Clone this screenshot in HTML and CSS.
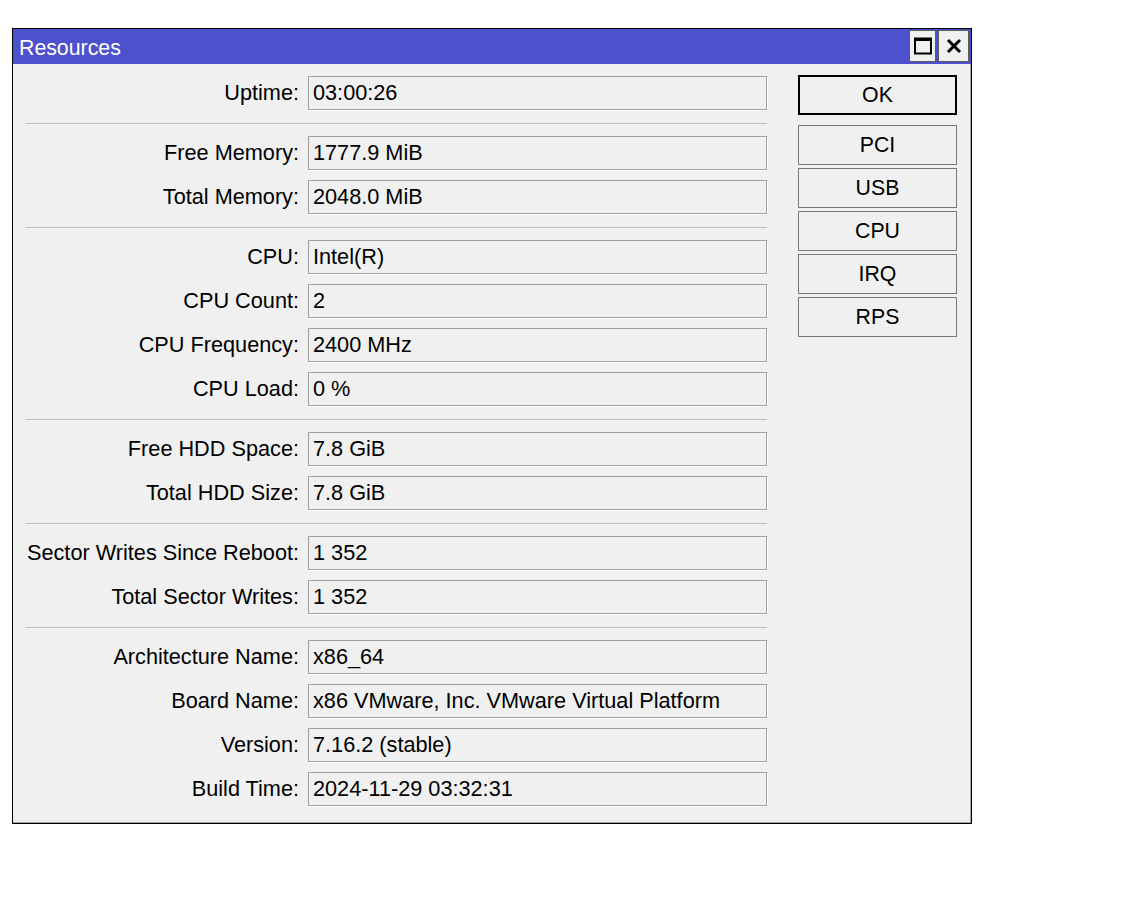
FILE: index.html
```html
<!DOCTYPE html>
<html>
<head>
<meta charset="utf-8">
<title>Resources</title>
<link rel="stylesheet" href="styles.css">
</head>
<body>
<div class="window">
  <div class="titlebar">
    <span class="title">Resources</span>
    <div class="tb-buttons">
      <button class="tb-btn" aria-label="Maximize">
        <svg width="18" height="18" viewBox="0 0 18 18"><rect x="1" y="1.5" width="16" height="15" fill="none" stroke="#000" stroke-width="2"/><rect x="1" y="1" width="16" height="3" fill="#000"/></svg>
      </button>
      <button class="tb-btn" aria-label="Close">
        <svg width="16" height="16" viewBox="0 0 16 16"><path d="M2 2 L14 14 M14 2 L2 14" stroke="#000" stroke-width="3" fill="none"/></svg>
      </button>
    </div>
  </div>
  <div class="body">
    <div class="form">
      <div class="row"><label>Uptime:</label><div class="field">03:00:26</div></div>
      <div class="sep"></div>
      <div class="row"><label>Free Memory:</label><div class="field">1777.9 MiB</div></div>
      <div class="row"><label>Total Memory:</label><div class="field">2048.0 MiB</div></div>
      <div class="sep"></div>
      <div class="row"><label>CPU:</label><div class="field">Intel(R)</div></div>
      <div class="row"><label>CPU Count:</label><div class="field">2</div></div>
      <div class="row"><label>CPU Frequency:</label><div class="field">2400 MHz</div></div>
      <div class="row"><label>CPU Load:</label><div class="field">0 %</div></div>
      <div class="sep"></div>
      <div class="row"><label>Free HDD Space:</label><div class="field">7.8 GiB</div></div>
      <div class="row"><label>Total HDD Size:</label><div class="field">7.8 GiB</div></div>
      <div class="sep"></div>
      <div class="row"><label>Sector Writes Since Reboot:</label><div class="field">1 352</div></div>
      <div class="row"><label>Total Sector Writes:</label><div class="field">1 352</div></div>
      <div class="sep"></div>
      <div class="row"><label>Architecture Name:</label><div class="field">x86_64</div></div>
      <div class="row"><label>Board Name:</label><div class="field">x86 VMware, Inc. VMware Virtual Platform</div></div>
      <div class="row"><label>Version:</label><div class="field">7.16.2 (stable)</div></div>
      <div class="row"><label>Build Time:</label><div class="field">2024-11-29 03:32:31</div></div>
    </div>
    <div class="actions">
      <button class="btn btn-default">OK</button>
      <div class="btn-group">
        <button class="btn">PCI</button>
        <button class="btn">USB</button>
        <button class="btn">CPU</button>
        <button class="btn">IRQ</button>
        <button class="btn">RPS</button>
      </div>
    </div>
  </div>
</div>
</body>
</html>
```

FILE: styles.css
```css
html, body {
  margin: 0;
  padding: 0;
  background: #ffffff;
}
body {
  font-family: "Liberation Sans", Arial, sans-serif;
  font-size: 21.7px;
  color: #000;
}
.window {
  margin: 28px 0 0 12px;
  width: 960px;
  height: 796px;
  box-sizing: border-box;
  border: 1px solid #000;
  background: #f0f0f0;
  box-shadow: inset -1px -1px 0 #a0a0a0;
  display: flex;
  flex-direction: column;
}
.titlebar {
  height: 35px;
  background: #4e51cd;
  display: flex;
  align-items: center;
  justify-content: space-between;
  padding: 0 2px 0 6px;
  flex-shrink: 0;
}
.title {
  color: #fff;
  font-size: 21.3px;
  line-height: 1;
  margin-top: 4px;
}
.tb-buttons {
  display: flex;
  gap: 2px;
  align-self: flex-start;
  margin-top: 1px;
}
.tb-btn {
  width: 27px;
  height: 32px;
  padding: 0;
  margin: 0;
  border: 1px solid #5a5a5a;
  background: #f0f0f0;
  display: flex;
  align-items: center;
  justify-content: center;
}
.tb-btn + .tb-btn {
  width: 31px;
}
.body {
  display: flex;
  padding: 12px 13px 0 13px;
  gap: 31px;
}
.form {
  display: flex;
  flex-direction: column;
  width: 741px;
}
.row {
  display: grid;
  grid-template-columns: 273px 459px;
  column-gap: 9px;
  align-items: center;
  margin-bottom: 10px;
}
.row label {
  text-align: right;
  white-space: nowrap;
}
.field {
  height: 34px;
  box-sizing: border-box;
  border: 1px solid #a0a0a0;
  box-shadow: 1px 1px 0 #ffffff;
  padding: 0 4px;
  line-height: 32px;
  white-space: nowrap;
  overflow: hidden;
}
.sep {
  height: 1px;
  background: #bdbdbd;
  margin: 3px 0 12px 0;
}
.actions {
  display: flex;
  flex-direction: column;
  width: 159px;
  margin-top: -1px;
}
.btn {
  height: 40px;
  width: 159px;
  box-sizing: border-box;
  border: 1px solid #7a7a7a;
  background: #f0f0f0;
  font-family: "Liberation Sans", Arial, sans-serif;
  font-size: 21.3px;
  color: #000;
  padding: 0;
  margin: 0;
}
.btn-default {
  border: 2px solid #000;
}
.btn-group {
  display: flex;
  flex-direction: column;
  gap: 3px;
  margin-top: 10px;
}
```
